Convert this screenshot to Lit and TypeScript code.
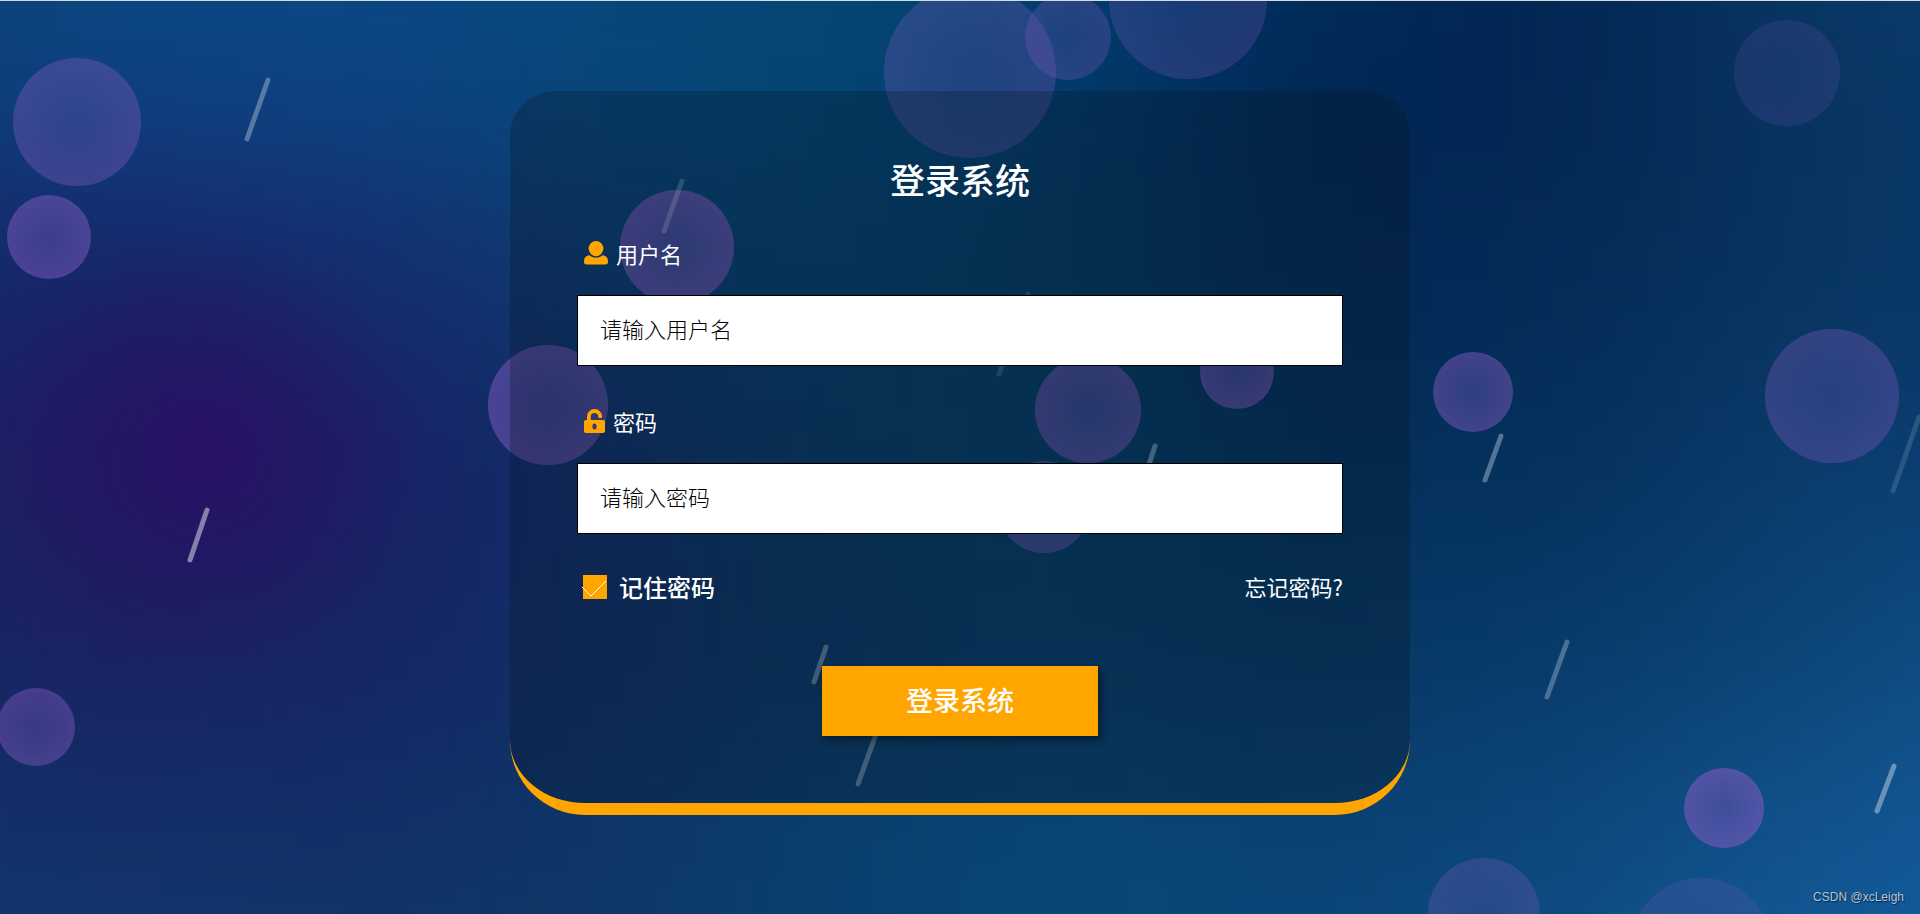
import { LitElement, html, svg, css } from "lit";
import { customElement } from "lit/decorators.js";

// Colour field of the night-sky backdrop, one row per 183px band.
const FIELD: string[][] = [
  ["#0c4276", "#094a84", "#0a4a8a", "#05497e", "#044875", "#024071", "#002e5c", "#032653", "#0a3867", "#0c3e70"],
  ["#0e3e7a", "#0e4080", "#0e4282", "#07477a", "#044572", "#02396a", "#002654", "#032652", "#08335f", "#0b3c6c"],
  ["#142a68", "#182368", "#152c6e", "#0d3a6e", "#053f6c", "#04395f", "#022855", "#042b56", "#08345f", "#0b3b6d"],
  ["#192364", "#211864", "#1b1f66", "#102e68", "#083a64", "#053c65", "#032f5b", "#05305c", "#0b3b6c", "#0c3e74"],
  ["#172763", "#1b2061", "#172463", "#102f67", "#0a3664", "#063c67", "#063763", "#083a69", "#0c4475", "#10508a"],
  ["#12306a", "#142f67", "#122f67", "#0e3566", "#0a406e", "#094575", "#0b4173", "#0d467c", "#11528c", "#13599a"],
  ["#103c72", "#103b70", "#113869", "#0c3a66", "#0a4070", "#094a7c", "#0c467c", "#0f4e86", "#135a9a", "#1460a4"],
];

// x, y, radius, strength
const BUBBLES: number[][] = [
  [77, 121, 64, 0.66], [49, 236, 42, 0.86], [548, 404, 60, 0.85], [677, 246, 57, 1],
  [970, 71, 86, 0.5], [1068, 36, 43, 0.5], [1188, -1, 79, 0.42], [1088, 409, 53, 0.85],
  [1237, 371, 37, 0.96], [1044, 506, 46, 0.72], [1787, 72, 53, 0.28], [1473, 391, 40, 0.82],
  [1832, 395, 67, 0.58], [36, 726, 39, 0.76], [1724, 807, 40, 1], [1484, 913, 56, 0.48],
  [1701, 948, 71, 0.32],
];

// lower end, upper end, strength
const STREAKS: number[][] = [
  [247, 138, 268, 79, 0.34], [190, 559, 207, 509, 0.5], [664, 230, 682, 180, 0.24],
  [999, 373, 1028, 293, 0.16], [1137, 500, 1155, 445, 0.4], [814, 681, 826, 646, 0.36],
  [858, 783, 879, 725, 0.36], [1485, 479, 1501, 435, 0.36], [1547, 696, 1567, 641, 0.3],
  [1877, 810, 1894, 765, 0.42], [1893, 490, 1919, 416, 0.15],
];

@customElement("night-backdrop")
class NightBackdrop extends LitElement {
  static styles = css`
    :host { display: block; position: absolute; inset: 0; overflow: hidden; background: #0a3564; }
    .scene { display: block; width: 100%; height: 100%; }
  `;

  render() {
    return html`<svg class="scene" viewBox="0 0 1920 913" preserveAspectRatio="xMidYMid slice" aria-hidden="true">
      <defs>
        <filter id="soft" filterUnits="userSpaceOnUse" x="-240" y="-184" width="2400" height="1281" color-interpolation-filters="sRGB">
          <feGaussianBlur stdDeviation="100 76"></feGaussianBlur>
        </filter>
        <radialGradient id="bubble">
          <stop offset="0" stop-color="#5e50ac" stop-opacity=".58"></stop>
          <stop offset="1" stop-color="#7c58ba" stop-opacity=".62"></stop>
        </radialGradient>
        <radialGradient id="glow">
          <stop offset="0" stop-color="#2c0e68" stop-opacity=".8"></stop>
          <stop offset="1" stop-color="#25125f" stop-opacity="0"></stop>
        </radialGradient>
      </defs>
      <g filter="url(#soft)">
        ${FIELD.map((row, r) => row.map((c, i) => svg`
          <rect x=${(i - 1) * 240 - (i === 0 ? 240 : 0)} y=${(r - 1) * 183 - (r === 0 ? 200 : 0)}
            width=${i === 0 || i === 9 ? 481 : 241} height=${r === 0 || r === 6 ? 384 : 184} fill=${c}></rect>`))}
      </g>
      <circle cx="205" cy="450" r="220" fill="url(#glow)"></circle>
      ${BUBBLES.map(([x, y, r, o]) => svg`<circle cx=${x} cy=${y} r=${r} fill="url(#bubble)" opacity=${o}></circle>`)}
      ${STREAKS.map(([x1, y1, x2, y2, o]) => svg`
        <line x1=${x1} y1=${y1} x2=${x2} y2=${y2} stroke="#e4ecf4" stroke-opacity=${o} stroke-width="5" stroke-linecap="round"></line>`)}
    </svg>`;
  }
}

@customElement("app-root")
class AppRoot extends LitElement {
  static styles = css`
    :host {
      display: block; position: relative; box-sizing: border-box; min-height: 100vh;
      border-top: 1px solid #d3dbdd; overflow: hidden;
      font-family: "Noto Sans CJK SC", "Noto Sans", sans-serif; color: #fff;
    }
    * { box-sizing: border-box; }
    .page { position: relative; display: flex; justify-content: center; padding: 90px 20px 97px; }
    .card {
      display: flex; flex-direction: column; width: 100%; max-width: 900px; padding: 64px 67px 67px;
      background: rgba(8, 22, 32, .28); border-bottom: 12px solid orange;
      border-radius: 45px 45px 75px 75px;
    }
    .title { margin: 0 0 34px; font-size: 35px; line-height: 48px; font-weight: 500; text-align: center; }
    .label { display: flex; align-items: center; gap: 8px; padding-left: 7px; margin-bottom: 26px; font-size: 22px; line-height: 32px; }
    .icon { display: block; height: 24px; fill: orange; }
    .field {
      width: 100%; height: 71px; margin: 0 0 39px; padding: 0 22px 6px; border: 1px solid #000; border-radius: 0;
      background: #fff; font: 300 22px/32px "Noto Sans CJK SC", sans-serif; color: #000; outline: none;
    }
    .field::placeholder { color: #000; opacity: 1; }
    .row { display: flex; justify-content: space-between; align-items: flex-start; height: 32px; padding-left: 6px; }
    .remember { display: flex; align-items: center; gap: 12px; font-size: 24px; line-height: 28px; font-weight: 500; }
    .tick { display: grid; width: 24px; height: 24px; }
    .tick > * { grid-area: 1 / 1; }
    .box { appearance: none; width: 24px; height: 24px; margin: 0; background: orange; }
    .mark { width: 24px; height: 24px; overflow: visible; pointer-events: none; fill: none; stroke: #fff; visibility: hidden; }
    .box:checked + .mark { visibility: visible; }
    .forgot { color: #fff; font-size: 22px; line-height: 26px; text-decoration: none; }
    .submit {
      align-self: center; width: 276px; height: 70px; margin-top: 61px; border: 0; padding: 0 0 2px; background: orange; color: #fff;
      font: 500 27px/40px "Noto Sans CJK SC", sans-serif; box-shadow: 3px 4px 8px rgba(0, 0, 0, .45); cursor: pointer;
    }
    .credit {
      position: absolute; right: 16px; bottom: 9px; font: 12px/16px "Liberation Sans", Arial, sans-serif;
      color: #b3c5d9; text-shadow: 1px 1px 1px rgba(0, 0, 0, .6);
    }
  `;

  render() {
    return html`
      <night-backdrop></night-backdrop>
      <main class="page">
        <form class="card" @submit=${(e: Event) => e.preventDefault()}>
          <h1 class="title">登录系统</h1>
          <label class="label" for="user">
            <svg class="icon" viewBox="0 0 24 24" width="24" aria-hidden="true">
              <ellipse cx="12" cy="7.6" rx="7.4" ry="7.6"></ellipse>
              <path d="M5.4 14.2c1.8 1.6 4 2.4 6.6 2.4s4.8-.8 6.6-2.4c3.4.3 5.2 2.3 5.4 5.6v1.2c0 1.6-.9 2.5-2.5 2.5h-19C.9 23.500 0 22.600 0 21v-1.200c.2-3.300 2-5.300 5.400-5.600z"></path>
            </svg>
            用户名
          </label>
          <input class="field" id="user" type="text" placeholder="请输入用户名" autocomplete="username">
          <label class="label" for="pass">
            <svg class="icon" viewBox="0 0 21 24" width="21" aria-hidden="true">
              <path fill-rule="evenodd" d="M3 11V7.500a7.500 7.500 0 0 1 15 0c0 1-.5 1.500-1.300 1.500h-1.200c-.8 0-1.300-.5-1.300-1.300a3.700 3.700 0 0 0-7.400 0V11H19c1.300 0 2 .8 2 2v9c0 1.300-.8 2-2 2H2c-1.300 0-2-.8-2-2v-9c0-1.300.8-2 2-2zM10.500 14.500a2 2 0 0 0-2 2v2a2 2 0 0 0 4 0v-2a2 2 0 0 0-2-2z"></path>
            </svg>
            密码
          </label>
          <input class="field" id="pass" type="password" placeholder="请输入密码" autocomplete="current-password">
          <div class="row">
            <label class="remember">
              <span class="tick">
                <input class="box" type="checkbox" checked>
                <svg class="mark" viewBox="0 0 24 24" aria-hidden="true"><path d="M-1 12l9 9L23 6"></path></svg>
              </span>
              记住密码
            </label>
            <a class="forgot" href="#">忘记密码?</a>
          </div>
          <button class="submit" type="submit">登录系统</button>
        </form>
      </main>
      <span class="credit">CSDN @xcLeigh</span>
    `;
  }
}
